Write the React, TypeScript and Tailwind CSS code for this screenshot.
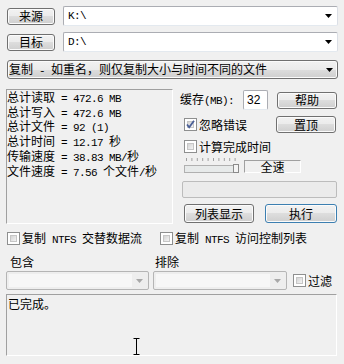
import React from "react";

const faceBase =
  "flex items-center rounded-[3px] border bg-[linear-gradient(#f2f2f2_0%,#ebebeb_50%,#dddddd_50%,#cfcfcf_100%)] text-[12px] leading-none text-black shadow-[inset_0_0_0_1px_#fbfbfb]";

function Btn({ children, className = "" }: { children: React.ReactNode; className?: string }) {
  return <div className={`${faceBase} justify-center border-[#707070] ${className}`}>{children}</div>;
}

function L({ children }: { children: React.ReactNode }) {
  return (
    <span className="font-['Liberation_Mono',monospace] text-[11px] tracking-[-0.6px] whitespace-pre">
      {children}
    </span>
  );
}

function Arrow({ color = "#000" }: { color?: string }) {
  return (
    <svg width="7" height="4" viewBox="0 0 7 4" className="shrink-0">
      <polygon points="0,0 7,0 3.5,4" fill={color} />
    </svg>
  );
}

function Check({ checked = false }: { checked?: boolean }) {
  return (
    <div className="relative h-[13px] w-[13px] shrink-0 border border-[#8e8f8f] bg-white p-[2px]">
      <div className="h-full w-full border border-[#c6c6c6] bg-[linear-gradient(135deg,#d4d4d4,#f4f4f4)]" />
      {checked && (
        <svg width="11" height="11" viewBox="0 0 11 11" className="absolute left-[0px] top-[0px]">
          <path d="M2 5.5 L4.2 8.2 L9 1.8" stroke="#4a5f97" strokeWidth="1.8" fill="none" />
        </svg>
      )}
    </div>
  );
}

function TextInput({ value }: { value: string }) {
  return (
    <div className="flex h-[20px] w-[275px] items-center justify-between rounded-[2px] border border-[#abadb3] border-b-[#e3e9ef] border-r-[#dbdfe6] bg-white pl-[4px] pr-[5px]">
      <span className="font-['Liberation_Mono',monospace] text-[11px] leading-none tracking-[-0.6px] text-black">
        {value}
      </span>
      <Arrow />
    </div>
  );
}

function DisabledCombo({ w, inner }: { w: string; inner: string }) {
  return (
    <div className={`flex h-[19px] ${w} items-center rounded-[2px] border border-[#b5b5b5] bg-[#eeeeee] p-[2px]`}>
      <div className={`h-full ${inner} bg-[#f7f7f7]`} />
      <div className="flex flex-1 items-center justify-center">
        <Arrow color="#a8a8a8" />
      </div>
    </div>
  );
}

export default function App() {
  return (
    <div className="h-[364px] w-[344px] overflow-hidden bg-[#f0f0f0] font-['Noto_Sans_CJK_SC','Liberation_Sans',sans-serif] text-[12px] leading-[12px] text-black">
      {/* row 1 */}
      <div className="mt-[6px] flex items-center">
        <Btn className="ml-[7px] h-[17px] w-[48px]">来源</Btn>
        <div className="ml-[8px]">
          <TextInput value="K:\" />
        </div>
      </div>
      {/* row 2 */}
      <div className="mt-[6px] flex items-center">
        <Btn className="ml-[7px] h-[17px] w-[48px]">目标</Btn>
        <div className="ml-[8px]">
          <TextInput value="D:\" />
        </div>
      </div>
      {/* row 3 combo */}
      <div className={`${faceBase} ml-[7px] mt-[8px] h-[19px] w-[331px] justify-between border-[#707070] pl-[1px] pr-[4px]`}>
        <span>
          复制<L> - </L>如重名，则仅复制大小与时间不同的文件
        </span>
        <Arrow />
      </div>

      {/* main section */}
      <div className="mt-[10px] flex h-[135px]">
        <div className="ml-[6px] h-[135px] w-[167px] border-b border-l border-r border-t border-b-white border-l-[#a0a0a0] border-r-white border-t-[#a0a0a0] pt-[1px] leading-[11.7px]">
          <div>总计读取<L> = 472.6 MB</L></div>
          <div>总计写入<L> = 472.6 MB</L></div>
          <div>总计文件<L> = 92 (1)</L></div>
          <div>总计时间<L> = 12.17 </L>秒</div>
          <div>传输速度<L> = 38.83 MB/</L>秒</div>
          <div>文件速度<L> = 7.56 </L>个文件<L>/</L>秒</div>
        </div>

        <div className="ml-[7px] flex w-[157px] flex-col">
          {/* cache row */}
          <div className="mt-[1px] flex h-[20px] items-center">
            <div className="w-[63px]">
              缓存<L>(MB):</L>
            </div>
            <div className="flex h-[20px] w-[25px] items-center rounded-[2px] border border-[#abadb3] border-b-[#e3e9ef] bg-white pl-[3px]">
              <span className="font-['Liberation_Sans',sans-serif] text-[12px]">32</span>
            </div>
            <Btn className="ml-[9px] h-[17px] w-[60px]">帮助</Btn>
          </div>
          {/* ignore errors */}
          <div className="mt-[6px] flex h-[17px] items-center">
            <div className="ml-[4px]">
              <Check checked />
            </div>
            <span className="ml-[2px] w-[77px]">忽略错误</span>
            <Btn className="h-[17px] w-[60px]">置顶</Btn>
          </div>
          {/* compute time */}
          <div className="mt-[7px] flex h-[13px] items-center">
            <div className="ml-[4px]">
              <Check />
            </div>
            <span className="ml-[2px]">计算完成时间</span>
          </div>
          {/* slider row */}
          <div className="mt-[5px] flex h-[15px] items-end">
            <svg width="56" height="15" viewBox="0 0 56 15" className="ml-[4px]">
              {[2, 7.4, 12.8, 18.2, 23.6, 29, 34.4, 39.8, 45.2, 50.6].map((x) => (
                <line key={x} x1={x + 0.5} y1="0" x2={x + 0.5} y2="3" stroke="#a0a0a0" strokeWidth="1" />
              ))}
              <rect x="0.5" y="7.5" width="54" height="7" fill="#e7eaea" stroke="#b0b0b0" />
              <rect x="49.5" y="6.5" width="5" height="8" fill="#f4f4f4" stroke="#8a8a8a" />
            </svg>
            <div className="ml-[4px] flex h-[13px] w-[57px] items-center justify-center border border-b-white border-l-[#a0a0a0] border-r-white border-t-[#a0a0a0]">
              全速
            </div>
          </div>
          {/* progress */}
          <div className="ml-[2px] mt-[8px] h-[17px] w-[155px] rounded-[2px] border border-[#bcbcbc] bg-[#ebebeb]" />
          {/* buttons */}
          <div className="mt-[6px] flex h-[19px]">
            <Btn className="ml-[4px] h-[19px] w-[70px]">列表显示</Btn>
            <div className={`${faceBase} ml-[11px] h-[19px] w-[72px] justify-center border-[#3c7fb1] shadow-[inset_0_0_0_1px_#a9dcf5]`}>
              执行
            </div>
          </div>
        </div>
      </div>

      {/* ntfs checkboxes */}
      <div className="mt-[8px] flex h-[13px] items-center">
        <div className="ml-[7px]">
          <Check />
        </div>
        <span className="ml-[2px] w-[138px]">
          复制<L> NTFS </L>交替数据流
        </span>
        <Check />
        <span className="ml-[2px]">
          复制<L> NTFS </L>访问控制列表
        </span>
      </div>

      {/* labels */}
      <div className="mt-[11px] flex h-[12px]">
        <span className="ml-[10px] w-[145px]">包含</span>
        <span>排除</span>
      </div>
      {/* combos */}
      <div className="mt-[3px] flex h-[19px] items-center">
        <div className="ml-[6px]">
          <DisabledCombo w="w-[143px]" inner="w-[123px]" />
        </div>
        <div className="ml-[4px]">
          <DisabledCombo w="w-[134px]" inner="w-[114px]" />
        </div>
        <div className="ml-[6px]">
          <Check />
        </div>
        <span className="ml-[2px]">过滤</span>
      </div>

      {/* log */}
      <div className="relative ml-[6px] mt-[4px] h-[62px] w-[331px] border border-b-white border-l-[#a0a0a0] border-r-white border-t-[#a0a0a0] pl-[1px] pt-[3px]">
        已完成。
        <svg width="7" height="17" viewBox="0 0 7 17" className="absolute left-[126px] top-[43px]">
          <path d="M0.5 0.5 H6.5 M3.5 0.5 V16.5 M0.5 16.5 H6.5" stroke="#000" strokeWidth="1" fill="none" />
        </svg>
      </div>
    </div>
  );
}
